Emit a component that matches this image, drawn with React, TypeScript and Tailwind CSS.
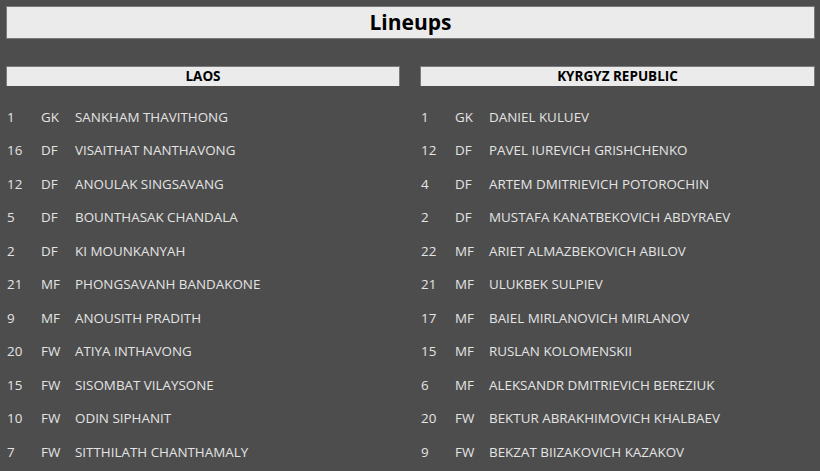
import React from "react";

const laos: [string, string, string][] = [
  ["1", "GK", "SANKHAM THAVITHONG"],
  ["16", "DF", "VISAITHAT NANTHAVONG"],
  ["12", "DF", "ANOULAK SINGSAVANG"],
  ["5", "DF", "BOUNTHASAK CHANDALA"],
  ["2", "DF", "KI MOUNKANYAH"],
  ["21", "MF", "PHONGSAVANH BANDAKONE"],
  ["9", "MF", "ANOUSITH PRADITH"],
  ["20", "FW", "ATIYA INTHAVONG"],
  ["15", "FW", "SISOMBAT VILAYSONE"],
  ["10", "FW", "ODIN SIPHANIT"],
  ["7", "FW", "SITTHILATH CHANTHAMALY"],
];

const kyr: [string, string, string][] = [
  ["1", "GK", "DANIEL KULUEV"],
  ["12", "DF", "PAVEL IUREVICH GRISHCHENKO"],
  ["4", "DF", "ARTEM DMITRIEVICH POTOROCHIN"],
  ["2", "DF", "MUSTAFA KANATBEKOVICH ABDYRAEV"],
  ["22", "MF", "ARIET ALMAZBEKOVICH ABILOV"],
  ["21", "MF", "ULUKBEK SULPIEV"],
  ["17", "MF", "BAIEL MIRLANOVICH MIRLANOV"],
  ["15", "MF", "RUSLAN KOLOMENSKII"],
  ["6", "MF", "ALEKSANDR DMITRIEVICH BEREZIUK"],
  ["20", "FW", "BEKTUR ABRAKHIMOVICH KHALBAEV"],
  ["9", "FW", "BEKZAT BIIZAKOVICH KAZAKOV"],
];

function Team({ name, players }: { name: string; players: [string, string, string][] }) {
  return (
    <div className="flex flex-col">
      <div className="h-[20px] bg-[#ebebeb] border-t border-x border-[#7a7a7a] flex items-center justify-center text-[13.5px] font-bold text-black">
        {name}
      </div>
      <div className="mt-[14px] flex flex-col">
        {players.map((p, i) => (
          <div key={i} className="h-[33.5px] flex items-center text-[13.4px] text-[#e4e4e4] whitespace-nowrap">
            <span className="w-[35px] pl-[1px]">{p[0]}</span>
            <span className="w-[34px]">{p[1]}</span>
            <span>{p[2]}</span>
          </div>
        ))}
      </div>
    </div>
  );
}

export default function App() {
  return (
    <div className="w-[820px] h-[471px] bg-[#4d4d4d] px-[6px] pt-[6px] overflow-hidden font-['Open_Sans','Noto_Sans',sans-serif]">
      <div className="h-[33px] w-[809px] bg-[#ebebeb] border border-[#7a7a7a] flex items-center justify-center text-[21px] font-bold text-black">
        Lineups
      </div>
      <div className="mt-[27px] grid grid-cols-[394px_395px] gap-x-[20px]">
        <Team name="LAOS" players={laos} />
        <Team name="KYRGYZ REPUBLIC" players={kyr} />
      </div>
    </div>
  );
}
